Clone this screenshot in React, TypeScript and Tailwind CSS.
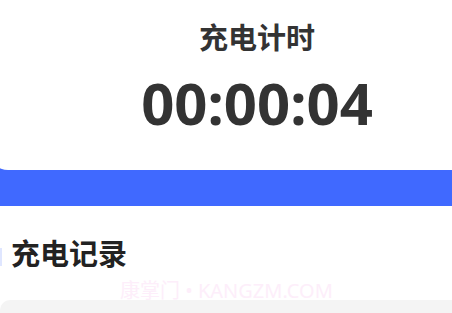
import React from "react";

const FONT = "font-['Noto_Sans','Noto_Sans_CJK_SC',sans-serif]";

export default function App() {
  return (
    <div className={`relative h-[313px] w-[452px] overflow-hidden bg-white ${FONT}`}>
      {/* timer card over blue band */}
      <div className="bg-[#4069ff] pb-[36px]">
        <div className="-ml-[10px] flex h-[170px] w-[534px] flex-col items-center rounded-bl-[18px] bg-white">
          <h2 className="mt-[20px] text-[29px] leading-[36px] font-bold text-[#333]">
            充电计时
          </h2>
          <div className="mt-[12px] text-[58px] leading-[70px] font-bold text-[#333]">
            00:00:04
          </div>
        </div>
      </div>

      {/* records */}
      <div className="relative pt-[30px]">
        <div className="absolute left-0 top-[42px] h-[18px] w-[2px] bg-[#dfe6ff]" />
        <h3 className="pl-[11px] text-[29px] leading-[36px] font-bold text-[#222]">
          充电记录
        </h3>
        <div className="absolute left-[120px] top-[74px] text-[20px] leading-[22px] text-[#fdeefa]">
          康掌门 • KANGZM.COM
        </div>
        <div className="mt-[28px] h-[40px] rounded-tl-[10px] bg-[#f4f4f4]" />
      </div>
    </div>
  );
}
